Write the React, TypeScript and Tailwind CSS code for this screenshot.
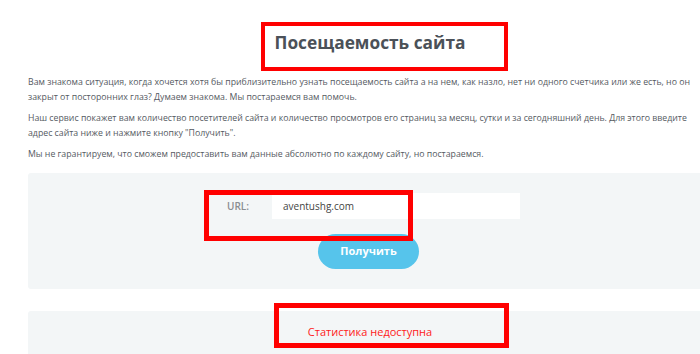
import React from "react";

export default function App() {
  const body = { fontFamily: '"Open Sans", "Liberation Sans", sans-serif' };
  return (
    <div className="relative w-[700px] h-[354px] overflow-hidden bg-white" style={body}>
      <div className="w-[684px] ml-[28px] pt-[31px]">
        <h2 className="h-[24px] leading-[24px] text-center text-[17.3px] font-bold text-[#4b5158]">
          Посещаемость сайта
        </h2>
        <div className="mt-[20px] text-[8.75px] leading-[15px] text-[#555a5f] whitespace-nowrap">
          <p>
            Вам знакома ситуация, когда хочется хотя бы приблизительно узнать посещаемость сайта а на нем, как назло, нет ни одного счетчика или же есть, но он
            <br />
            закрыт от посторонних глаз? Думаем знакома. Мы постараемся вам помочь.
          </p>
          <p className="mt-[6px]">
            Наш сервис покажет вам количество посетителей сайта и количество просмотров его страниц за месяц, сутки и за сегодняшний день. Для этого введите
            <br />
            адрес сайта ниже и нажмите кнопку "Получить".
          </p>
          <p className="mt-[6px]">
            Мы не гарантируем, что сможем предоставить вам данные абсолютно по каждому сайту, но постараемся.
          </p>
        </div>

        <div className="mt-[11px] h-[116px] rounded-[3px] bg-[#f3f6f7] pt-[20px]">
          <div className="ml-[199px] flex items-center">
            <span className="w-[45px] shrink-0 text-[10px] font-semibold text-[#8a8d91]">URL:</span>
            <div className="w-[248px] shrink-0 h-[26px] bg-white flex items-center pl-[11px] text-[10px] text-[#444]">
              aventushg.com
            </div>
          </div>
          <button className="block mt-[15px] ml-[290px] w-[101px] h-[35px] rounded-full bg-[#56c4eb] text-white text-[11px] font-bold">
            Получить
          </button>
        </div>

        <div className="mt-[22px] h-[60px] rounded-[3px] bg-[#f3f6f7] pt-[13px] text-center text-[11px] leading-[16px] font-medium text-[#ff1a1a]">
          Статистика недоступна
        </div>
      </div>

      <div className="absolute left-[261px] top-[22px] w-[247px] h-[49px] border-4 border-[#ff0000]" />
      <div className="absolute left-[204px] top-[190px] w-[209px] h-[51px] border-[5px] border-[#ff0000]" />
      <div className="absolute left-[274px] top-[303px] w-[235px] h-[45px] border-[5px] border-[#ff0000]" />
    </div>
  );
}
